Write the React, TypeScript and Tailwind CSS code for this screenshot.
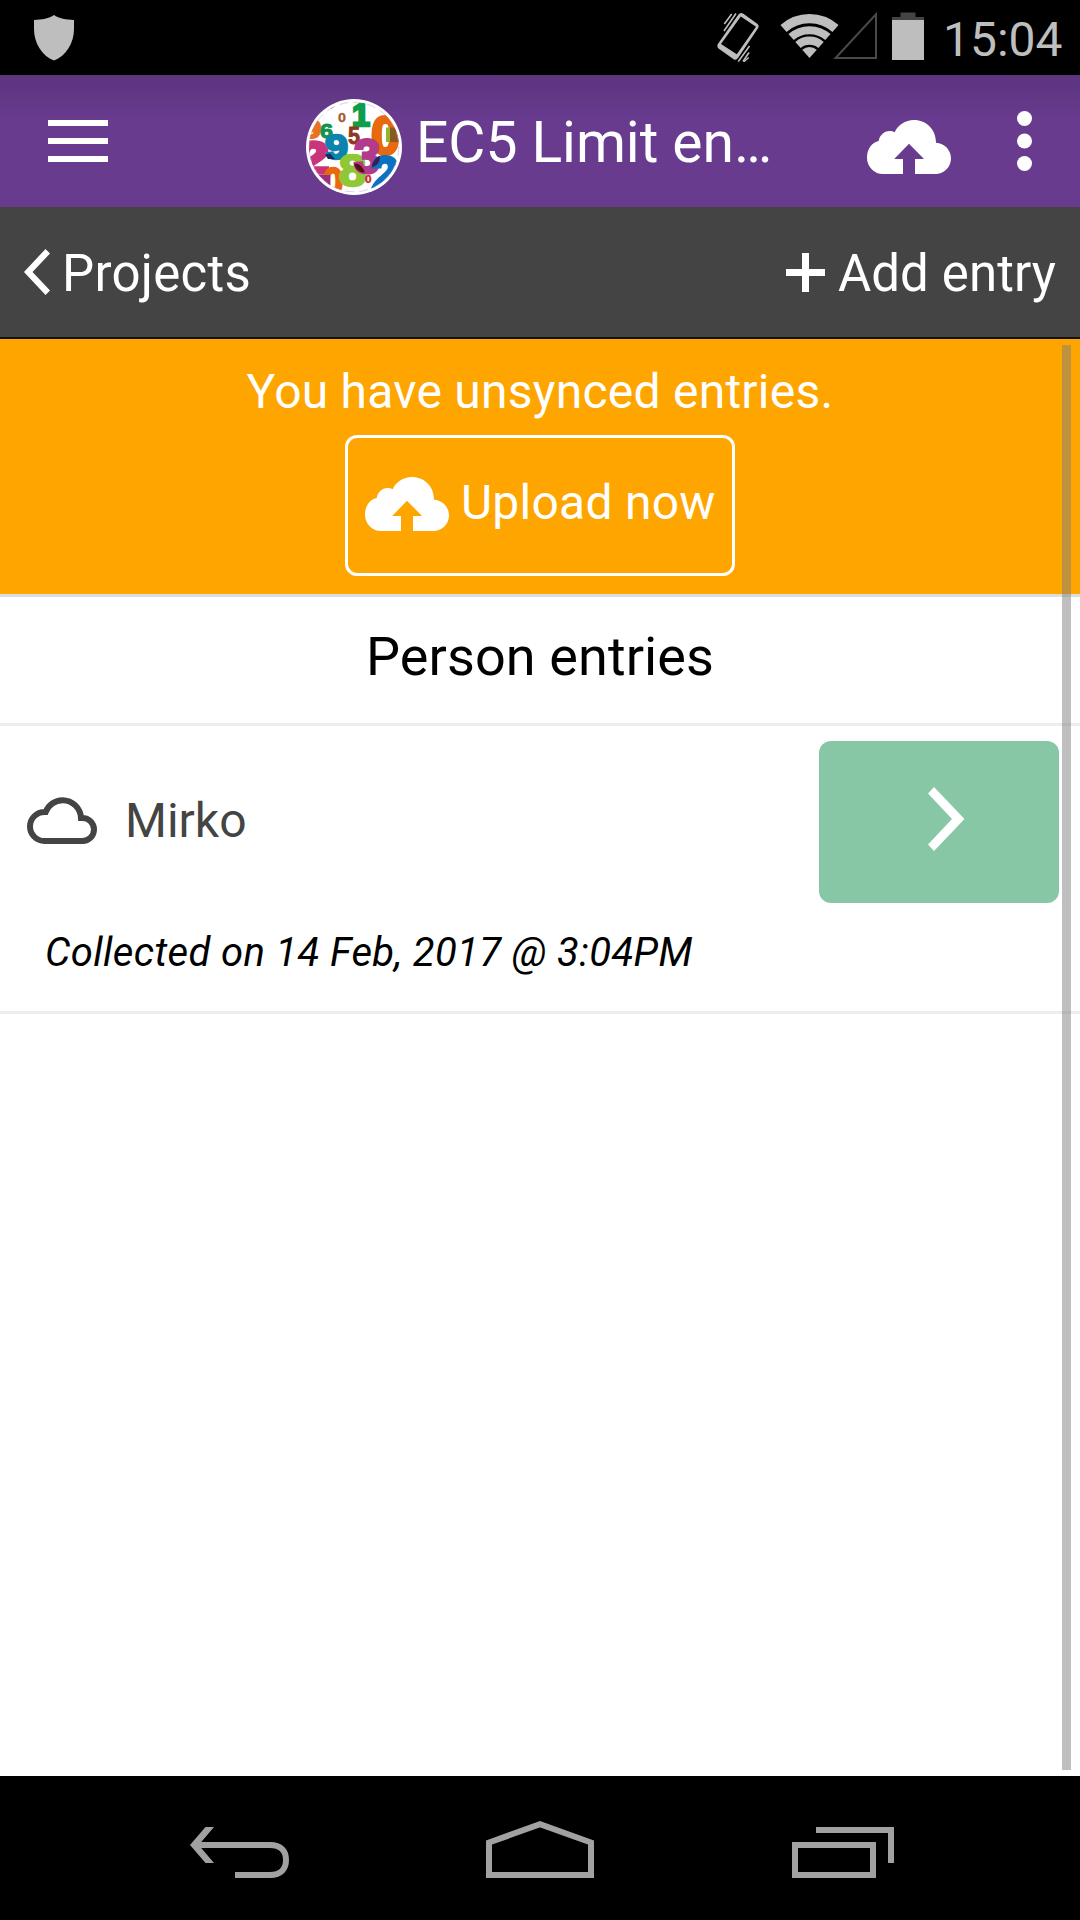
const SILVER = '#bebebe';

function StatusBar() {
  return (
    <div className="flex h-[75px] items-center bg-black pl-[33px]">
      <svg className="h-[75px] w-[42px]" viewBox="33 0 42 75" fill={SILVER}>
        <path d="M54 15C49 18.5 42 19.6 34 20V29C34 43 42 56 54 60.5C66 56 74 43 74 29V20C66 19.6 59 18.5 54 15Z" />
      </svg>
      <svg className="ml-[641px] h-[75px] w-[44px]" viewBox="716 0 44 75" fill="none" stroke={SILVER}>
        <path
          d="M741 13Q742 13 743 13.6L757.6 24Q759 25.3 758.5 27.5L738 58Q736.5 60.3 734 59.5L718.5 48.5Q716.8 47 717.5 44.5L738.5 14.5Q739.5 13 741 13ZM740.8 16.6L721 44L736.8 54.3L756 26.8Z"
          fill={SILVER}
          fillRule="evenodd"
          stroke="none"
        />
        <path d="M724.3 24L731.7 14M724 31L736 13.5M738.3 61.5L749.5 46M743 61.5L749 52.5" strokeWidth="1.6" />
        <path d="M728 31.5L740 15M744 61.8L748.7 57.5" strokeWidth="1.4" />
      </svg>
      <svg className="ml-[20px] h-[75px] w-[60px]" viewBox="780 0 60 75" fill="none" stroke={SILVER}>
        <path d="M783.5 28.5A39.2 39.2 0 0 1 835.5 28.5" strokeWidth="9.2" />
        <path d="M791.1 37.1A27.9 27.9 0 0 1 827.9 37.1" strokeWidth="8" />
        <path d="M798 45A17.4 17.4 0 0 1 821 45" strokeWidth="8.2" />
        <path d="M809.5 58L802.2 49.7A11 11 0 0 1 816.8 49.7Z" fill={SILVER} stroke="none" />
      </svg>
      <svg className="-ml-[8px] h-[75px] w-[46px]" viewBox="832 0 46 75" fill="none" stroke="#4a4a4a" strokeWidth="2">
        <path d="M835.5 58H876V14.3Z" />
      </svg>
      <svg className="ml-[14px] h-[75px] w-[32px]" viewBox="892 0 32 75">
        <path d="M900.5 12.5H915.5V17H924V20H892V17H900.5Z" fill="#444" />
        <path d="M892 20H924V60H892Z" fill={SILVER} />
      </svg>
      <span className="ml-[19px] pt-[4px] text-[48px] leading-[60px] text-[#bebebe]">15:04</span>
    </div>
  );
}

function CloudUpload() {
  return (
    <svg className="h-[54px] w-[84px] shrink-0" viewBox="0 0 84 54" fill="currentColor">
      <path d="M16 54A16 16.5 0 0 1 0 37.5C0 29 5 22.3 11.7 21C12.5 15.5 17 11 22.5 11C24.5 11 26.2 11.3 27.7 12.2C31 5 38 0 47 0C59.5 0 69 9.5 69 22.8C77.5 23.3 84 30 84 38.5A15.5 15.5 0 0 1 69.5 54H48V39H57L42 23.7L27.2 39H36V54Z" />
    </svg>
  );
}

type Digit = { n: string; x: number; y: number; size: number; w: number; bold: number; color: string };

const DIGITS: Digit[] = [
  { n: '0', x: 32, y: 23, size: 13, w: 8, bold: 0.3, color: '#a85a30' },
  { n: '9', x: -3, y: 39, size: 25, w: 18, bold: 2, color: '#e8731a' },
  { n: '1', x: 46, y: 27, size: 31, w: 18, bold: 2.4, color: '#0c9e4a' },
  { n: '6', x: 14, y: 38.5, size: 21, w: 13, bold: 1, color: '#12934b' },
  { n: '5', x: 42, y: 44.5, size: 23, w: 12, bold: 0.8, color: '#93371f' },
  { n: '0', x: 65, y: 54.5, size: 53, w: 29, bold: 3.2, color: '#e8690f' },
  { n: '2', x: -8, y: 74, size: 44, w: 31, bold: 3.5, color: '#c9357a' },
  { n: '0', x: 17, y: 96, size: 38, w: 20, bold: 2.5, color: '#e8690f' },
  { n: '9', x: 19, y: 60, size: 35, w: 23, bold: 2.4, color: '#0d83ae' },
  { n: '8', x: 33, y: 87, size: 45, w: 27, bold: 2.6, color: '#8fc735' },
  { n: '3', x: 48, y: 73.5, size: 49, w: 26, bold: 3, color: '#b23b8b' },
  { n: '0', x: 59, y: 84, size: 10, w: 6.5, bold: 0.4, color: '#d0262e' },
  { n: '2', x: 65, y: 94, size: 51, w: 28, bold: 3.2, color: '#0a72c0' },
];

function ProjectLogo() {
  return (
    <svg className="h-[96px] w-[96px] shrink-0" viewBox="0 0 96 96">
      <defs>
        <clipPath id="logo-disc">
          <circle cx="48" cy="48" r="45" />
        </clipPath>
      </defs>
      <circle cx="48" cy="48" r="48" fill="#fff" />
      <g clipPath="url(#logo-disc)" fontFamily="'Liberation Sans', sans-serif" fontWeight="700">
        {DIGITS.map((d, i) => (
          <text
            key={i}
            x={d.x}
            y={d.y}
            fontSize={d.size}
            textLength={d.w}
            lengthAdjust="spacingAndGlyphs"
            fill={d.color}
            stroke={d.color}
            strokeWidth={d.bold}
          >
            {d.n}
          </text>
        ))}
        <path d="M80 28.5H84V43H80Z" fill="#93b52c" />
        <path d="M84 28.5H93V43H84Z" fill="#8a5a22" />
        <path d="M13 76H24V92H13Z" fill="#9a2f80" />
        <path d="M48 65C52 64 56 66 59 73.5C54 74 50 71 48 65Z" fill="#5d1010" />
        <path d="M66 66C68 60 71 57.5 74 57.5C74 63 71 67 66 68Z" fill="#3a1f55" />
        <path d="M19 55.5L24 54.5L29 60H22Z" fill="#1c2a5c" />
        <path d="M22 8L29 7L25 10Z" fill="#683b8f" />
      </g>
      <circle cx="48" cy="48" r="44.8" fill="none" stroke="#b9a3cc" strokeWidth="0.5" strokeDasharray="9 5" />
    </svg>
  );
}

function Header() {
  return (
    <header className="flex h-[132px] items-center bg-[#683b8f] bg-linear-to-b from-[#5c347e] to-[#683b8f] to-35% pl-[48px] text-white">
      <svg className="h-[42px] w-[60px]" viewBox="0 0 60 42" fill="currentColor">
        <path d="M0 0H60V6H0ZM0 18H60V24H0ZM0 36H60V42H0Z" />
      </svg>
      <div className="ml-[198px] flex h-full items-center pt-[12px]">
        <ProjectLogo />
      </div>
      <h1 className="ml-[14px] w-[357px] pt-[3px] text-[57px] leading-[72px] tracking-[-0.05px] whitespace-nowrap">
        EC5 Limit en…
      </h1>
      <div className="ml-[94px] pt-[12px]">
        <CloudUpload />
      </div>
      <svg className="ml-[66px] h-[60px] w-[15px]" viewBox="0 0 15 60" fill="currentColor">
        <circle cx="7.5" cy="7.5" r="7.5" />
        <circle cx="7.5" cy="30" r="7.5" />
        <circle cx="7.5" cy="52.5" r="7.5" />
      </svg>
    </header>
  );
}

function SubBar() {
  return (
    <div className="flex h-[132px] items-center justify-between border-b-2 border-[#111] bg-[#444] pr-[24px] pl-[24px] text-[51px] leading-[66px] text-white">
      <div className="flex items-center">
        <svg className="h-[46px] w-[26px]" viewBox="0 0 26 46" fill="currentColor">
          <path d="M21.5 0L26 4.5L8.5 23L26 41.5L21.5 46L0 23Z" />
        </svg>
        <span className="ml-[12px] pt-[3px] tracking-[0.25px]">Projects</span>
      </div>
      <div className="flex items-center">
        <svg className="h-[39px] w-[39px]" viewBox="0 0 39 39" fill="currentColor">
          <path d="M16 0H23V16H39V23H23V39H16V23H0V16H16Z" />
        </svg>
        <span className="ml-[13px] pt-[3px] tracking-[0.1px]">Add entry</span>
      </div>
    </div>
  );
}

function UnsyncedBanner() {
  return (
    <section className="flex h-[258px] flex-col items-center border-b-[3px] border-[#ddd] bg-[#ffa500] pt-[23px] text-[48px] leading-[60px] tracking-[0.24px] text-white">
      <p>You have unsynced entries.</p>
      <button className="mt-[13px] flex h-[141px] w-[390px] items-center rounded-[12px] border-[3px] border-white pl-[17px]">
        <span className="pb-[3px]">
          <CloudUpload />
        </span>
        <span className="ml-[12px] pb-[6px]">Upload now</span>
      </button>
    </section>
  );
}

function Entry() {
  return (
    <article className="h-[288px] border-b-[3px] border-[#ededed] pt-[15px]">
      <div className="flex h-[162px] items-center pr-[21px] pl-[27px]">
        <svg className="mb-[3px] h-[47px] w-[71px]" viewBox="27 797 71 47" fill="none" stroke="#444" strokeWidth="6">
          <path d="M44.500 841A14.500 14.500 0 0 1 44.500 812H45.700A18 18 0 0 1 62.500 800.200A18.500 18.500 0 0 1 81 818H82.500A11.500 11.500 0 0 1 82.500 841Z" />
        </svg>
        <span className="ml-[27px] flex-1 pb-[3px] text-[48px] leading-[60px] text-[#444]">Mirko</span>
        <button className="flex h-[162px] w-[240px] items-center rounded-[12px] bg-[#88c7a5] pb-[6px] pl-[109px]">
          <svg className="h-[64px] w-[37px]" viewBox="0 0 37 64" fill="#fff">
            <path d="M6 0L36.5 32L6 64L0 57.5L24 32L0 6.5Z" />
          </svg>
        </button>
      </div>
      <p className="mt-[20px] pl-[45px] text-[40px] leading-[60px] tracking-[0.38px] text-black italic">
        Collected on 14 Feb, 2017 @ 3:04PM
      </p>
    </article>
  );
}

function NavBar() {
  return (
    <nav className="flex h-[144px] items-start bg-black">
      <svg className="mt-[51px] ml-[190px] h-[51px] w-[99px]" viewBox="190 1827 99 51" fill="none" stroke="#a1a1a1" strokeWidth="6">
        <path d="M198 1845H270C281 1845 286 1851 286 1860S281 1875 270 1875H235" />
        <path d="M190 1845L205.5 1827H214L198.7 1845L214 1863H205.5Z" fill="#a1a1a1" stroke="none" />
      </svg>
      <svg className="mt-[45px] ml-[197px] h-[57px] w-[108px]" viewBox="486 1821 108 57" fill="none" stroke="#a1a1a1" strokeWidth="6">
        <path d="M489 1875V1842.5L540 1824.2L591 1842.5V1875Z" />
      </svg>
      <svg className="mt-[51px] ml-[198px] h-[51px] w-[102px]" viewBox="792 1827 102 51" fill="none" stroke="#a1a1a1" strokeWidth="6">
        <path d="M795 1845H873V1875H795ZM816 1830H891V1863" />
      </svg>
    </nav>
  );
}

export default function App() {
  return (
    <div className="flex h-[1920px] w-[1080px] flex-col overflow-hidden bg-white font-[Roboto,sans-serif]">
      <StatusBar />
      <Header />
      <SubBar />
      <main className="relative flex-1">
        <UnsyncedBanner />
        <h2 className="flex h-[129px] items-center justify-center border-b-[3px] border-[#ededed] pb-[7px] text-[54px] leading-[66px] tracking-[0.1px] text-black">
          Person entries
        </h2>
        <Entry />
        <div className="absolute top-[6px] right-[9px] bottom-[6px] w-[9px] bg-[#808080]/50" />
      </main>
      <NavBar />
    </div>
  );
}
